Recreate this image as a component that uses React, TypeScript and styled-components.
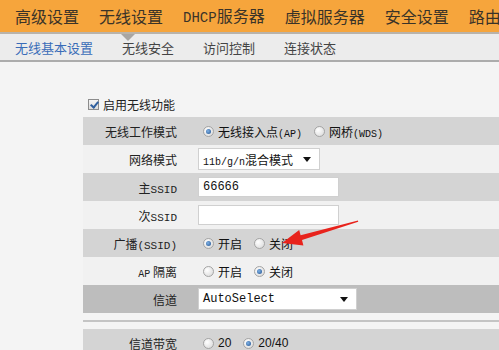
import styled, { createGlobalStyle, css } from 'styled-components';

const GlobalStyle = createGlobalStyle`
  html, body {
    margin: 0;
    padding: 0;
    background: #f4f4f4;
  }
  body {
    width: 499px;
    height: 350px;
    overflow: hidden;
    font-family: "Noto Sans CJK SC", "Liberation Sans", sans-serif;
    color: #333;
  }
`;

const Page = styled.div`
  position: relative;
  width: 499px;
  height: 350px;
  overflow: hidden;
`;

const TopNav = styled.div`
  display: flex;
  align-items: center;
  gap: 20px;
  height: 32px;
  padding-left: 15px;
  background: #f6a53c;
  border-bottom: 2px solid #b9b3aa;
  white-space: nowrap;
`;

const NavItem = styled.span`
  font-size: 16px;
  line-height: 32px;
  color: #3a3328;
`;

const SubNav = styled.div`
  position: relative;
  display: flex;
  align-items: center;
  gap: 29px;
  height: 26px;
  padding-left: 15px;
  background: #ececec;
  border-bottom: 2px solid #acacac;
`;

const SubItem = styled.span<{ $active?: boolean }>`
  font-size: 13px;
  color: ${(p) => (p.$active ? '#3a6cb8' : '#444')};
`;

const Pointer = styled.span`
  position: absolute;
  left: 121px;
  top: 0;
  width: 0;
  height: 0;
  border-left: 7px solid transparent;
  border-right: 7px solid transparent;
  border-top: 7px solid #a9a6a2;
`;

const Content = styled.div`
  padding-left: 83px;
  padding-top: 30px;
`;

const EnableRow = styled.div`
  display: flex;
  align-items: center;
  gap: 4px;
  height: 25px;
  padding-left: 5px;
  font-size: 12px;
  color: #222;
`;

const Check = styled.span`
  position: relative;
  box-sizing: border-box;
  width: 11px;
  height: 11px;
  border: 1px solid #8c8c8c;
  background: linear-gradient(#f4f4f4, #dcdcdc);
  &::after {
    content: '';
    position: absolute;
    left: 2.5px;
    top: 0px;
    width: 3px;
    height: 6px;
    border-right: 2px solid #2f5f9e;
    border-bottom: 2px solid #2f5f9e;
    transform: rotate(40deg);
  }
`;

const Row = styled.div<{ $tone: 'dark' | 'light' | 'deep' }>`
  display: grid;
  grid-template-columns: 100px 1fr;
  align-items: center;
  height: 28px;
  background: ${(p) =>
    p.$tone === 'dark' ? '#d4d4d4' : p.$tone === 'deep' ? '#bdbdbd' : '#f1f1f1'};
`;

const Label = styled.div`
  text-align: right;
  padding-right: 6px;
  font-size: 12px;
  color: #222;
  white-space: nowrap;
`;

const Value = styled.div`
  display: flex;
  align-items: center;
  gap: 12px;
  padding-left: 15px;
  font-size: 12px;
  color: #111;
  white-space: nowrap;
`;

const Option = styled.span`
  display: inline-flex;
  align-items: center;
  gap: 4px;
  &:first-child {
    margin-left: 5px;
  }
`;

const Radio = styled.span<{ $on?: boolean }>`
  position: relative;
  box-sizing: border-box;
  display: inline-block;
  width: 11px;
  height: 11px;
  border-radius: 50%;
  border: 1px solid #a4a4a4;
  background: radial-gradient(circle at 35% 35%, #ffffff, #d6d6d6);
  ${(p) =>
    p.$on &&
    css`
      &::after {
        content: '';
        position: absolute;
        left: 2px;
        top: 2px;
        width: 5px;
        height: 5px;
        border-radius: 50%;
        background: radial-gradient(circle at 40% 40%, #7fb2e6, #1f4f8d);
      }
    `}
`;

const Lat = styled.span<{ $size?: number }>`
  font-family: "Liberation Mono", monospace;
  font-size: ${(p) => p.$size || 10}px;
`;

const Num = styled.span`
  font-family: "Liberation Sans", sans-serif;
  font-size: 12px;
`;

const Field = styled.div<{ $w: number; $h?: number }>`
  box-sizing: border-box;
  display: flex;
  align-items: center;
  justify-content: space-between;
  width: ${(p) => p.$w}px;
  height: ${(p) => p.$h || 20}px;
  padding: 0 5px 0 4px;
  background: #fff;
  border: 1px solid #d0d0d0;
  font-size: 12px;
  color: #111;
`;

const Caret = styled.span`
  width: 0;
  height: 0;
  border-left: 4px solid transparent;
  border-right: 4px solid transparent;
  border-top: 5px solid #111;
  margin-right: 3px;
`;

const Gap = styled.div`
  height: 16px;
  display: flex;
  align-items: center;
`;

const Rule = styled.div`
  width: 100%;
  height: 2px;
  background: #c4c4c4;
`;

const ArrowLayer = styled.svg`
  position: absolute;
  left: 0;
  top: 0;
  pointer-events: none;
`;

export default function App() {
  return (
    <Page>
      <GlobalStyle />
      <TopNav>
        <NavItem>高级设置</NavItem>
        <NavItem>无线设置</NavItem>
        <NavItem>
          <Lat $size={14}>DHCP</Lat>服务器
        </NavItem>
        <NavItem>虚拟服务器</NavItem>
        <NavItem>安全设置</NavItem>
        <NavItem>路由</NavItem>
      </TopNav>
      <SubNav>
        <Pointer />
        <SubItem $active>无线基本设置</SubItem>
        <SubItem>无线安全</SubItem>
        <SubItem>访问控制</SubItem>
        <SubItem>连接状态</SubItem>
      </SubNav>
      <Content>
        <EnableRow>
          <Check />
          启用无线功能
        </EnableRow>
        <Row $tone="dark">
          <Label>无线工作模式</Label>
          <Value>
            <Option>
              <Radio $on />
              <span>
                无线接入点<Lat>(AP)</Lat>
              </span>
            </Option>
            <Option>
              <Radio />
              <span>
                网桥<Lat>(WDS)</Lat>
              </span>
            </Option>
          </Value>
        </Row>
        <Row $tone="light">
          <Label>网络模式</Label>
          <Value>
            <Field $w={122} $h={22}>
              <span>
                <Lat $size={10}>11b/g/n</Lat>混合模式
              </span>
              <Caret />
            </Field>
          </Value>
        </Row>
        <Row $tone="dark">
          <Label>
            主<Lat $size={11}>SSID</Lat>
          </Label>
          <Value>
            <Field $w={141}>
              <Lat $size={12}>66666</Lat>
            </Field>
          </Value>
        </Row>
        <Row $tone="light">
          <Label>
            次<Lat $size={11}>SSID</Lat>
          </Label>
          <Value>
            <Field $w={141} />
          </Value>
        </Row>
        <Row $tone="dark">
          <Label>
            广播<Lat $size={11}>(SSID)</Lat>
          </Label>
          <Value>
            <Option>
              <Radio $on />
              <span>开启</span>
            </Option>
            <Option>
              <Radio />
              <span>关闭</span>
            </Option>
          </Value>
        </Row>
        <Row $tone="light">
          <Label>
            <Lat $size={10}>AP</Lat> 隔离
          </Label>
          <Value>
            <Option>
              <Radio />
              <span>开启</span>
            </Option>
            <Option>
              <Radio $on />
              <span>关闭</span>
            </Option>
          </Value>
        </Row>
        <Row $tone="deep">
          <Label>信道</Label>
          <Value>
            <Field $w={159} $h={22}>
              <Lat $size={12}>AutoSelect</Lat>
              <Caret />
            </Field>
          </Value>
        </Row>
        <Gap>
          <Rule />
        </Gap>
        <Row $tone="dark">
          <Label>信道带宽</Label>
          <Value>
            <Option>
              <Radio />
              <Num>20</Num>
            </Option>
            <Option>
              <Radio $on />
              <Num>20/40</Num>
            </Option>
          </Value>
        </Row>
      </Content>
      <ArrowLayer width="499" height="350" viewBox="0 0 499 350">
        <polygon
          points="358,220.4 300.6,235.3 299.2,230 282,243 303.4,245.4 302,240.1 358.2,221.8"
          fill="#e8231c"
        />
      </ArrowLayer>
    </Page>
  );
}
